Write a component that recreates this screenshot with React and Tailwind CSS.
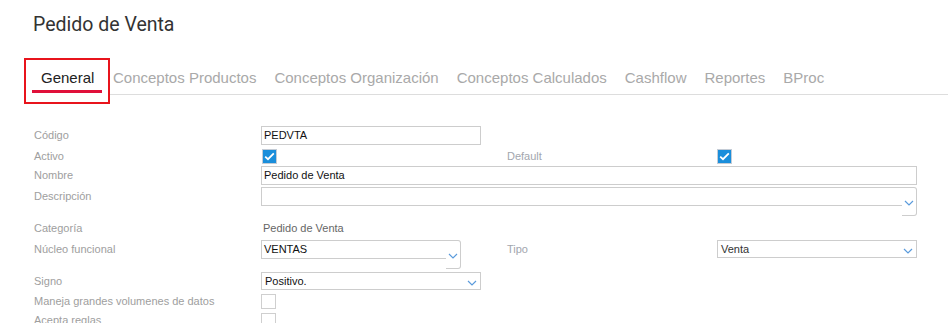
import React from "react";

const Chevron = ({ className = "" }) => (
  <svg width="10" height="6" viewBox="0 0 10 6" className={className}>
    <polyline points="1,1 5,5 9,1" fill="none" stroke="#5b9bdc" strokeWidth="1.2" />
  </svg>
);

const Check = ({ checked }) =>
  checked ? (
    <div className="w-[15px] h-[15px] border border-[#c4ccd6] bg-[#1a8edb] flex items-center justify-center">
      <svg width="11" height="9" viewBox="0 0 11 9">
        <polyline points="1.2,4.6 4,7.2 9.8,1.4" fill="none" stroke="#fff" strokeWidth="1.8" />
      </svg>
    </div>
  ) : (
    <div className="w-[15px] h-[15px] border border-[#cfcfcf] bg-white" />
  );

const Label = ({ children, className = "" }) => (
  <div className={"w-[227px] flex items-center text-[#9e9e9e] " + className}>{children}</div>
);

const Label2 = ({ children, className = "" }) => (
  <div className={"w-[210px] flex items-center text-[#a2a6ae] " + className}>{children}</div>
);

const Input = ({ value, w }) => (
  <div className={"h-[19px] border border-[#cdcdcd] flex items-center pl-[2px] text-[#111] " + w}>{value}</div>
);

const Combo = ({ value, w }) => (
  <div className={"flex h-[29px] " + w}>
    <div className="flex-1 h-[19px] border-l border-t border-b border-[#cdcdcd] flex items-center pl-[2px] text-[#111]">
      {value}
    </div>
    <div className="w-[15px] h-[29px] border-t border-r border-b border-[#cdcdcd] rounded-r-[3px] flex justify-center pt-[12px]">
      <Chevron />
    </div>
  </div>
);

const Select = ({ value, w, color = "text-[#111]" }) => (
  <div className={"h-[18px] border border-[#cdcdcd] flex items-center justify-between pl-[3px] pr-[3px] " + color + " " + w}>
    <span>{value}</span>
    <Chevron className="mt-[3px]" />
  </div>
);

export default function App() {
  const tabs = ["Conceptos Productos", "Conceptos Organización", "Conceptos Calculados", "Cashflow", "Reportes", "BProc"];
  return (
    <div className="w-[948px] h-[323px] bg-white overflow-hidden font-['Liberation_Sans',Arial,sans-serif]">
      <div className="pl-[33px] pt-[13px] text-[19.5px] leading-[24px] font-['Roboto',sans-serif] text-[#333]">
        Pedido de Venta
      </div>

      <div className="flex items-start mt-[21px] pl-[24px]">
        <div className="w-[86px] h-[46px] border-2 border-[#e8141c] pl-[6px]">
          <div className="pt-[9px] pl-[9px] text-[15px] leading-[17px] text-[#222]">General</div>
          <div className="mt-[4px] w-[70px] h-[3px] bg-[#e0103a]" />
        </div>
        <div className="flex-1 h-[37px] border-b border-[#dddddd] flex items-start gap-[18px] pl-[3px] pt-[11px] text-[15px] leading-[17px] text-[#a9a9a9]">
          {tabs.map((t) => (
            <span key={t}>{t}</span>
          ))}
        </div>
      </div>

      <div className="pl-[34px] text-[11px] leading-[13px]">
        <div className="flex h-[19px] mt-[22px]">
          <Label>Código</Label>
          <Input value="PEDVTA" w="w-[220px]" />
        </div>
        <div className="flex h-[15px] mt-[4px]">
          <Label>Activo</Label>
          <div className="w-[220px] pl-[1px]">
            <Check checked />
          </div>
          <div className="w-[26px]" />
          <Label2>Default</Label2>
          <Check checked />
        </div>
        <div className="flex h-[19px] mt-[2px]">
          <Label>Nombre</Label>
          <Input value="Pedido de Venta" w="w-[656px]" />
        </div>
        <div className="flex h-[29px] mt-[2px]">
          <Label className="h-[19px]">Descripción</Label>
          <Combo value="" w="w-[656px]" />
        </div>
        <div className="flex h-[18px] mt-[3px]">
          <Label>Categoría</Label>
          <div className="flex items-center pl-[2px] text-[#666]">Pedido de Venta</div>
        </div>
        <div className="flex h-[29px] mt-[3px]">
          <Label className="h-[19px]">Núcleo funcional</Label>
          <div className="w-[220px]">
            <Combo value="VENTAS" w="w-[200px]" />
          </div>
          <div className="w-[26px]" />
          <Label2 className="h-[18px]">Tipo</Label2>
          <div className="h-[18px]">
            <Select value="Venta" w="w-[200px]" color="text-[#333]" />
          </div>
        </div>
        <div className="flex h-[18px] mt-[3px]">
          <Label>Signo</Label>
          <Select value="Positivo." w="w-[220px]" />
        </div>
        <div className="flex h-[15px] mt-[4px]">
          <Label>Maneja grandes volumenes de datos</Label>
          <Check />
        </div>
        <div className="flex h-[15px] mt-[4px]">
          <Label>Acepta reglas</Label>
          <Check />
        </div>
      </div>
    </div>
  );
}
